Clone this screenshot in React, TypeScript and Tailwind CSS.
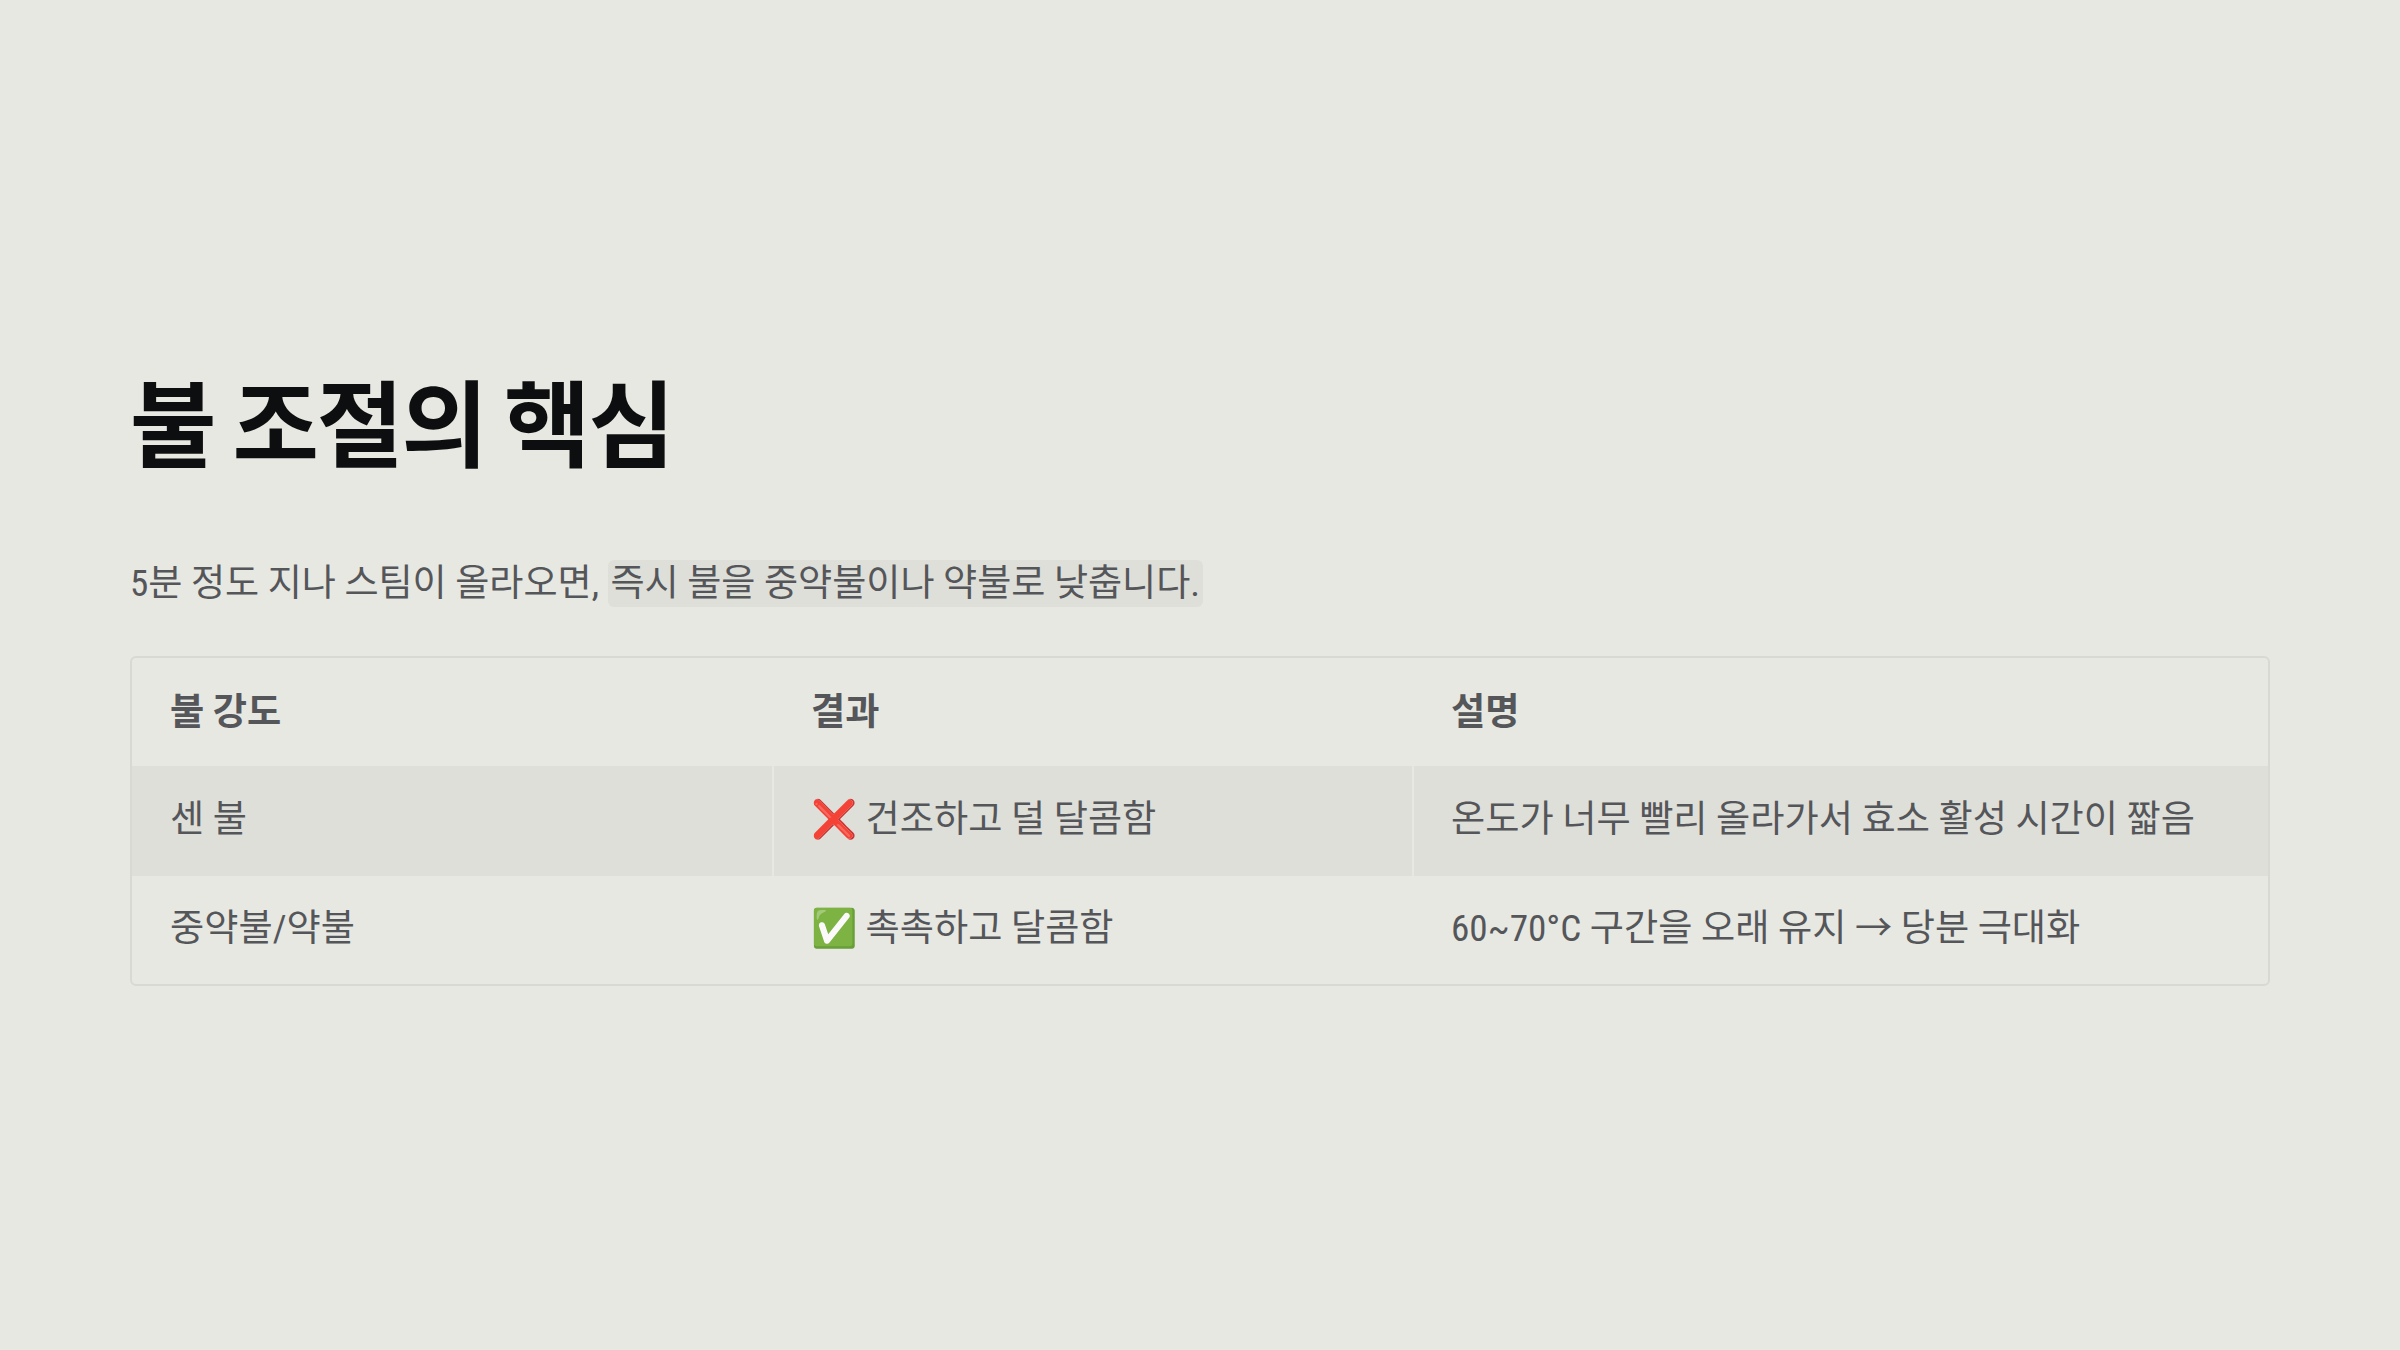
const rows = [
  { a: "센 불", b: "❌ 건조하고 덜 달콤함", c: "온도가 너무 빨리 올라가서 효소 활성 시간이 짧음", shaded: true },
  { a: "중약불/약불", b: "✅ 촉촉하고 달콤함", c: "60~70°C 구간을 오래 유지 → 당분 극대화", shaded: false },
];

export default function App() {
  return (
    <div className="w-[2400px] h-[1350px] bg-[#e7e8e2] px-[130px] pt-[372px] font-['Roboto','Noto_Sans_CJK_KR',sans-serif] font-stretch-condensed text-[#55565a]">
      <h1 className="text-[94px] leading-[1.2] font-bold text-[#0d0e10] tracking-[-0.02em] [word-spacing:-2px] mb-[69px]">불 조절의 핵심</h1>
      <p className="text-[37.1px] leading-[1.6] mb-[43px]">
        5분 정도 지나 스팀이 올라오면,{" "}
        <span className="bg-[#dedfd9] rounded-[6px] px-[3px] py-[2px]">즉시 불을 중약불이나 약불로 낮춥니다.</span>
      </p>
      <div className="border-2 border-[#d8d9d3] rounded-[6px] overflow-hidden">
        <div className="grid grid-cols-[640px_640px_1fr] h-[108px] pt-[1px] items-center font-bold text-[37.2px]">
          <div className="px-[38px]">불 강도</div>
          <div className="px-[39px]">결과</div>
          <div className="px-[39px]">설명</div>
        </div>
        {rows.map((r) => (
          <div key={r.a} className={`grid grid-cols-[640px_640px_1fr] text-[37.2px] ${r.shaded ? "h-[110px]" : "h-[108px]"}`}>
            <div className={`px-[38px] pb-[2px] flex items-center ${r.shaded ? "bg-[#dedfd9]" : ""}`}>{r.a}</div>
            <div className={`pb-[2px] flex items-center ${r.shaded ? "bg-[#dedfd9] ml-[2px] pl-[37px]" : "pl-[39px]"}`}>{r.b}</div>
            <div className={`pb-[2px] flex items-center ${r.shaded ? "bg-[#dedfd9] ml-[2px] pl-[37px]" : "pl-[39px]"}`}>{r.c}</div>
          </div>
        ))}
      </div>
    </div>
  );
}
